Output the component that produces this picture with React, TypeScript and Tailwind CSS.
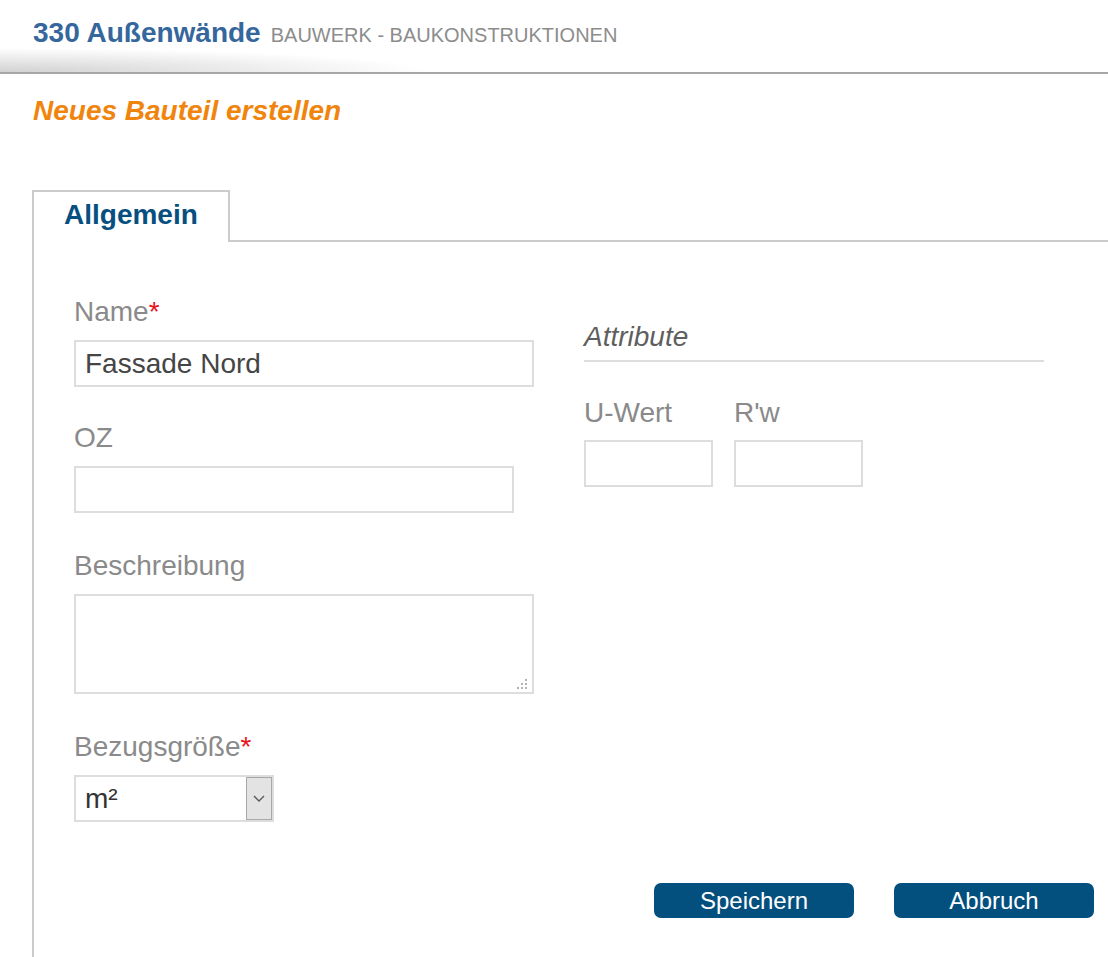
import React from "react";

function Label({ text, required }: { text: string; required?: boolean }) {
  return (
    <div className="text-[28px] leading-[32px] text-[#8a8a8a] mb-[12px] whitespace-nowrap">
      {text}
      {required && <span className="text-[#e8141c]">*</span>}
    </div>
  );
}

export default function App() {
  return (
    <div className="h-[957px] w-[1108px] overflow-hidden bg-white flex flex-col font-['Liberation_Sans',Arial,sans-serif]">
      {/* Header */}
      <div className="h-[74px] shrink-0 border-b-2 border-[#a6a6a6] bg-[radial-gradient(ellipse_430px_24px_at_0%_100%,#d2d2d2,#ffffff00)] pl-[33px] pt-[17px] flex items-baseline gap-[10px]">
        <span className="text-[28px] leading-[32px] font-bold text-[#35679c]">330 Außenwände</span>
        <span className="text-[20px] leading-[32px] text-[#8c8c8c] uppercase">Bauwerk - Baukonstruktionen</span>
      </div>

      {/* Page title */}
      <div className="mt-[21px] pl-[33px] text-[28px] leading-[32px] font-bold italic text-[#f0850d]">
        Neues Bauteil erstellen
      </div>

      {/* Tabs */}
      <div className="mt-[63px] flex pl-[32px] shrink-0">
        <div className="w-[198px] h-[52px] border-2 border-b-0 border-[#cccccc] pl-[30px] pt-[7px]">
          <span className="text-[28px] leading-[32px] font-bold text-[#074f80]">Allgemein</span>
        </div>
        <div className="flex-1 h-[52px] border-b-2 border-[#cccccc]" />
      </div>

      {/* Panel */}
      <div className="flex-1 ml-[32px] border-l-2 border-[#cccccc] pl-[40px] pt-[54px] flex flex-col">
        <div className="flex">
          {/* Left column */}
          <div className="w-[460px] flex flex-col">
            <Label text="Name" required />
            <input
              readOnly
              value="Fassade Nord"
              className="w-[460px] h-[47px] border-2 border-[#dddddd] pl-[9px] text-[28px] text-[#454545] outline-none bg-white"
            />

            <div className="mt-[35px]">
              <Label text="OZ" />
              <input readOnly value="" className="w-[440px] h-[47px] border-2 border-[#dddddd] outline-none bg-white" />
            </div>

            <div className="mt-[37px]">
              <Label text="Beschreibung" />
              <div className="relative w-[460px] h-[100px] border-2 border-[#dddddd] bg-white">
                <svg className="absolute right-[5px] bottom-[3px]" width="10" height="10" viewBox="0 0 10 10">
                  <g fill="#b3b3b3">
                    <rect x="8" y="0" width="2" height="2" />
                    <rect x="4" y="4" width="2" height="2" />
                    <rect x="8" y="4" width="2" height="2" />
                    <rect x="0" y="8" width="2" height="2" />
                    <rect x="4" y="8" width="2" height="2" />
                    <rect x="8" y="8" width="2" height="2" />
                  </g>
                </svg>
              </div>
            </div>

            <div className="mt-[37px]">
              <Label text="Bezugsgröße" required />
              <div className="w-[200px] h-[47px] border-2 border-[#dddddd] flex bg-white">
                <div className="flex-1 pl-[9px] text-[28px] leading-[43px] text-[#333333]">m²</div>
                <div className="w-[26px] h-full border border-[#a8a8a8] bg-[#e3e3e3] flex items-center justify-center">
                  <svg width="14" height="9" viewBox="0 0 14 9">
                    <path d="M2 2 L7 7 L12 2" fill="none" stroke="#5a5a5a" strokeWidth="1.4" />
                  </svg>
                </div>
              </div>
            </div>
          </div>

          {/* Right column */}
          <div className="ml-[50px] w-[460px] mt-[25px] flex flex-col">
            <div className="text-[28px] leading-[32px] italic text-[#5f5f5f] pb-[7px] border-b-2 border-[#dddddd]">
              Attribute
            </div>
            <div className="mt-[35px] flex gap-[21px]">
              <div className="flex flex-col">
                <div className="text-[28px] leading-[32px] text-[#8a8a8a] mb-[11px]">U-Wert</div>
                <input readOnly value="" className="w-[129px] h-[47px] border-2 border-[#dddddd] outline-none bg-white" />
              </div>
              <div className="flex flex-col">
                <div className="text-[28px] leading-[32px] text-[#8a8a8a] mb-[11px]">R'w</div>
                <input readOnly value="" className="w-[129px] h-[47px] border-2 border-[#dddddd] outline-none bg-white" />
              </div>
            </div>
          </div>
        </div>

        {/* Buttons */}
        <div className="mt-[61px] flex justify-end gap-[40px] pr-[14px]">
          <button className="w-[200px] h-[35px] rounded-[7px] bg-[#03507f] text-white text-[24px] leading-[35px]">
            Speichern
          </button>
          <button className="w-[200px] h-[35px] rounded-[7px] bg-[#03507f] text-white text-[24px] leading-[35px]">
            Abbruch
          </button>
        </div>
      </div>
    </div>
  );
}
